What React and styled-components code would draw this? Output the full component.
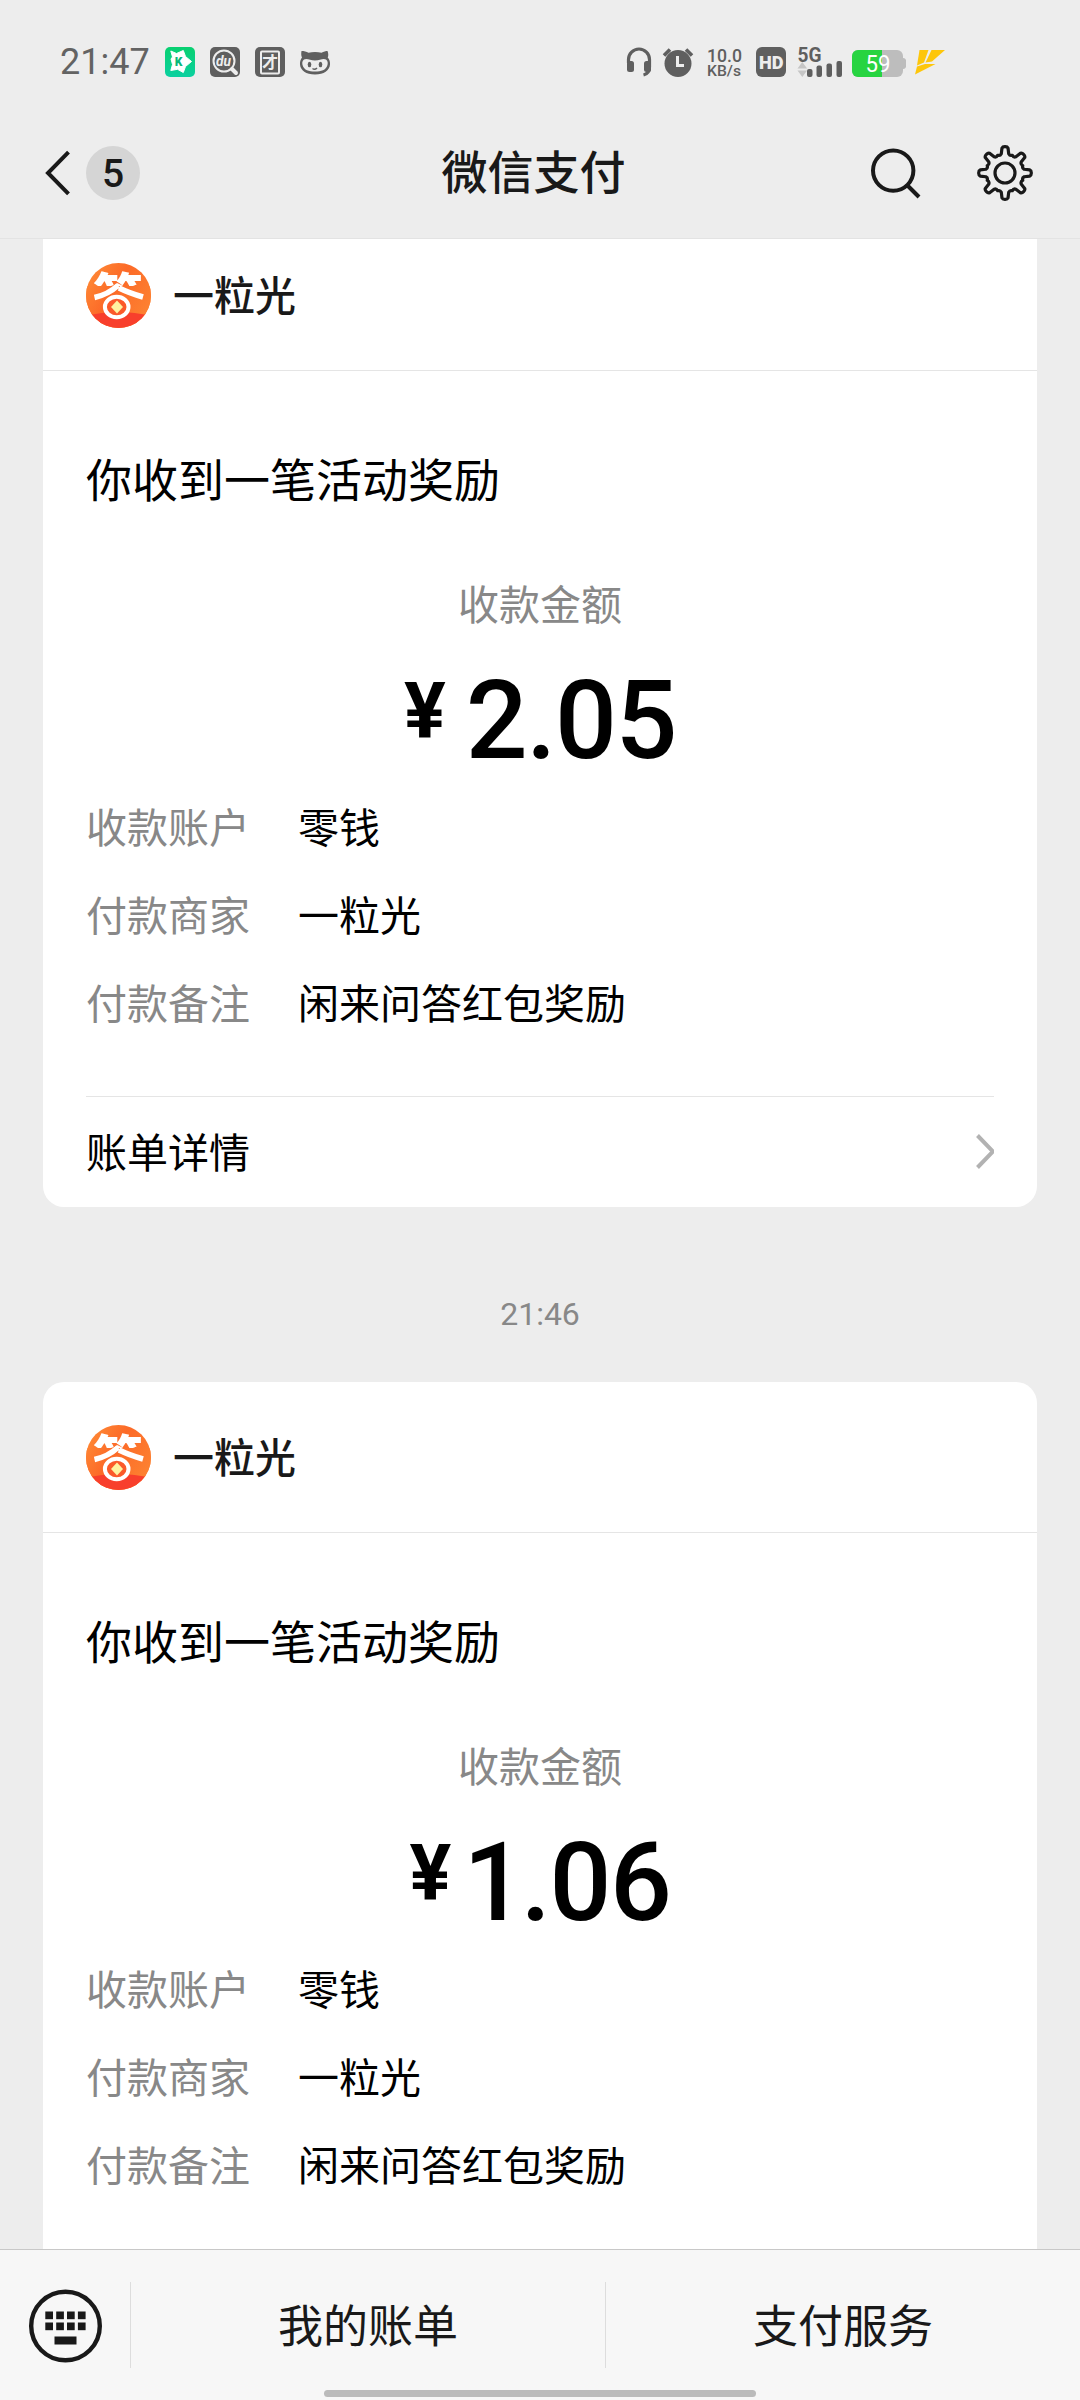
import React from "react";
import styled, { createGlobalStyle } from "styled-components";

const GlobalStyle = createGlobalStyle`
  * {
    box-sizing: border-box;
  }

  body {
    margin: 0;
    background: #ededed;
  }
`;

const cjk = `"Noto Sans CJK SC", sans-serif`;
const latin = `Roboto, "Noto Sans CJK SC", sans-serif`;

const Screen = styled.div`
  display: flex;
  flex-direction: column;
  width: 1080px;
  height: 2400px;
  overflow: hidden;
  background: #ededed;
  color: #000;
  font-family: ${cjk};
`;

const StatusBar = styled.header`
  display: flex;
  align-items: center;
  justify-content: space-between;
  height: 124px;
  padding: 0 134px 0 60px;
  flex-shrink: 0;
`;

const StatusGroup = styled.div`
  display: flex;
  align-items: center;
  gap: ${({ $gap }) => $gap}px;

  svg {
    display: block;
    overflow: visible;
  }
`;

const Clock = styled.span`
  width: 90px;
  font-family: ${latin};
  font-size: 36px;
  line-height: 44px;
  color: #636363;
`;

const NavBar = styled.nav`
  display: grid;
  grid-template-columns: 1fr auto 1fr;
  align-items: center;
  height: 115px;
  padding: 0 47px 16px 44px;
  border-bottom: 1px solid #e3e3e3;
  flex-shrink: 0;
`;

const NavLeft = styled.div`
  display: flex;
  align-items: center;
  gap: 16px;
`;

const Unread = styled.span`
  width: 54px;
  height: 54px;
  border-radius: 50%;
  background: #d5d5d5;
  font-family: ${latin};
  font-size: 39px;
  font-weight: 500;
  line-height: 56px;
  text-align: center;
  color: #191919;
`;

const Title = styled.h1`
  margin: 0 10px 0 0;
  padding-bottom: 8px;
  font-size: 46px;
  font-weight: 500;
  line-height: 70px;
  color: #191919;
`;

const NavRight = styled.div`
  display: flex;
  align-items: center;
  justify-content: flex-end;
  gap: 54px;
`;

const Feed = styled.main`
  flex: 1;
  min-height: 0;
  overflow: hidden;
  padding: 0 43px;
`;

const Card = styled.article`
  height: 987px;
  margin-top: ${({ $scrolled }) => ($scrolled ? "-19px" : "0")};
  border-radius: 21px;
  background: #fff;
`;

const CardHeader = styled.div`
  display: flex;
  align-items: center;
  gap: 22px;
  height: 151px;
  padding: 1px 43px 0;
  border-bottom: 1px solid #e5e5e5;
`;

const Merchant = styled.span`
  font-size: 41px;
  font-weight: 500;
  line-height: 62px;
  padding-bottom: 5px;
  color: #191919;
`;

const CardBody = styled.div`
  padding: 72px 43px 0;
`;

const Message = styled.p`
  margin: 0 0 60px;
  font-size: 46px;
  line-height: 68px;
`;

const AmountLabel = styled.p`
  margin: 0 0 42px;
  font-size: 41px;
  line-height: 62px;
  text-align: center;
  color: #888;
`;

const Amount = styled.div`
  display: flex;
  justify-content: center;
  gap: 20px;
  height: 90px;
  font-family: ${latin};
  font-weight: 500;
`;

const Yen = styled.span`
  font-size: 78px;
  font-weight: 700;
  line-height: 73px;
`;

const Digits = styled.span`
  font-size: 109px;
  line-height: 93px;
  letter-spacing: -1.5px;
`;

const Digit = styled.span`
  margin: ${({ $narrow }) => ($narrow ? "0 -3px 0 -8px" : "0")};
`;

const Details = styled.dl`
  margin: 16px 0 51px;
`;

const DetailRow = styled.div`
  display: flex;
  font-size: 41px;
  line-height: 88px;

  dt {
    width: 212px;
    color: #888;
  }

  dd {
    margin: 0;
  }
`;

const CardFooter = styled.div`
  display: flex;
  align-items: center;
  justify-content: space-between;
  height: 111px;
  border-top: 1px solid #e5e5e5;
  font-size: 41px;
  line-height: 62px;

  span {
    padding-bottom: 4px;
  }
`;

const Timestamp = styled.div`
  height: 175px;
  padding-top: 87px;
  font-family: ${latin};
  font-size: 32px;
  line-height: 40px;
  text-align: center;
  color: #888;
`;

const BottomBar = styled.footer`
  position: relative;
  display: flex;
  align-items: center;
  height: 151px;
  border-top: 1px solid #c8c8c8;
  background: #f7f7f7;
  flex-shrink: 0;
`;

const KeyboardButton = styled.div`
  display: flex;
  justify-content: center;
  width: 130px;
  padding-top: 1px;
`;

const MenuItem = styled.div`
  flex: 1;
  height: 86px;
  border-left: 1px solid #ddd;
  font-size: 45px;
  line-height: 84px;
  text-align: center;
  color: #191919;
`;

const HomeIndicator = styled.div`
  position: absolute;
  left: 324px;
  bottom: 3px;
  width: 432px;
  height: 7px;
  border-radius: 4px;
  background: #bbb;
`;

const GREY = "#5f5f5f";

function NotificationIcons() {
  return (
    <svg width="166" height="46" viewBox="0 -8 166 46">
      <defs>
        <linearGradient id="kgreen" x1="0" y1="0" x2="0" y2="1">
          <stop offset="0" stopColor="#08d070" />
          <stop offset="1" stopColor="#0bd0a0" />
        </linearGradient>
      </defs>
      <rect width="30" height="30" rx="5" fill="url(#kgreen)" />
      <path
        d="M5.800 4L11.500 6.500 18.300 3.500 20.500 9.500 26.500 14.500 20.500 19.500 18.300 25.500 12.500 22.300 5.800 23.500 7.500 17.500 6 12 7.500 10z"
        fill="#fff"
        stroke="#fff"
        strokeLinejoin="round"
      />
      <text x="9.800" y="19.200" fontFamily="Roboto" fontSize="12" fontWeight="900" fill="#08b878">
        K
      </text>

      <rect x="45" width="30" height="30" rx="5" fill={GREY} />
      <circle cx="59" cy="14" r="10.500" fill="none" stroke="#ededed" strokeWidth="2" />
      <path d="M67 22l4 4" stroke="#ededed" strokeWidth="4" strokeLinecap="round" />
      <text
        x="51"
        y="19"
        fontFamily="Roboto"
        fontSize="14"
        fontStyle="italic"
        fontWeight="700"
        textLength="15"
        lengthAdjust="spacingAndGlyphs"
        fill="#ededed"
      >
        du
      </text>

      <rect x="90" width="30" height="30" rx="5" fill={GREY} />
      <rect x="96" y="4.500" width="18" height="22" rx="1" fill="none" stroke="#ededed" strokeWidth="2" />
      <text x="97" y="21" fontFamily="Noto Sans CJK SC" fontSize="16" fontWeight="700" fill="#ededed">
        才
      </text>

      <path
        d="M136.500 4c2.500 0 5 .6 7 1.700 4-.9 9-.9 13 0 2-1.100 4.500-1.700 6-1.700 1 2.500 1 5 .2 6.500 1.800 2 2.500 4.500 2.300 7-.5 6-6 10-15 10s-14.500-4-15-10c-.2-2.500.5-5 2-7-.8-1.500-1-4-.5-6.500z"
        fill={GREY}
      />
      <path
        d="M139 12.500c3-1.700 6 1 11 1s8-2.700 11-1c2 1.500 2 4 1.300 6-1.300 4.500-6 6-12.300 6s-11-1.500-12.300-6c-.7-2-.7-4.500 1.300-6z"
        fill="#ededed"
      />
      <ellipse cx="144.500" cy="17.500" rx="1.800" ry="2.700" fill={GREY} />
      <ellipse cx="155.500" cy="17.500" rx="1.800" ry="2.700" fill={GREY} />
      <path d="M147.500 21.500c1.500 1.200 3 1 4.500-.5" fill="none" stroke={GREY} strokeWidth="1.500" />
    </svg>
  );
}

function SystemIcons() {
  return (
    <svg width="320" height="46" viewBox="0 -8 320 46">
      <path
        d="M2.500 16v-3.500a10.500 10.500 0 0 1 21 0V20c0 4.500-2 7-6 8"
        fill="none"
        stroke={GREY}
        strokeWidth="3.200"
      />
      <rect x="1" y="14" width="7" height="11" rx="2.500" fill={GREY} />
      <rect x="18" y="14" width="7" height="11" rx="2.500" fill={GREY} />

      <circle cx="52" cy="16.500" r="13.500" fill={GREY} />
      <path d="M38 8.500l6-6M66 8.500l-6-6" stroke={GREY} strokeWidth="3.600" />
      <path d="M51.500 9v9.500h6.500" fill="none" stroke="#ededed" strokeWidth="3" />

      <g fontFamily="Roboto" fontWeight="500" fill={GREY}>
        <text x="81" y="14.500" fontSize="19" textLength="35" lengthAdjust="spacingAndGlyphs">
          10.0
        </text>
        <text x="81" y="29" fontSize="15.500" textLength="34" lengthAdjust="spacingAndGlyphs">
          KB/s
        </text>
      </g>

      <rect x="130" width="30" height="30" rx="6" fill={GREY} />
      <text
        x="133"
        y="21.800"
        fontFamily="Roboto"
        fontSize="18.500"
        fontWeight="900"
        textLength="24.500"
        lengthAdjust="spacingAndGlyphs"
        fill="#ededed"
      >
        HD
      </text>

      <text
        x="171.500"
        y="14.500"
        fontFamily="Roboto"
        fontSize="19.500"
        fontWeight="700"
        textLength="24"
        lengthAdjust="spacingAndGlyphs"
        fill={GREY}
      >
        5G
      </text>
      <path d="M171.500 21.500l4.800-6.500 4.800 6.500zM171.500 23.500h9.600l-4.800 6.500z" fill="#c6c6c6" />
      <rect x="181" y="22" width="5.500" height="8" rx="2" fill={GREY} />
      <rect x="190.500" y="18.500" width="5.500" height="11.500" rx="2" fill={GREY} />
      <rect x="200.500" y="16.500" width="5.500" height="13.500" rx="2" fill={GREY} />
      <rect x="210.500" y="14" width="5.500" height="16" rx="2" fill={GREY} />

      <clipPath id="charge">
        <rect x="226" y="3" width="30" height="27" />
      </clipPath>
      <rect x="226" y="3" width="51" height="27" rx="6" fill="#bdbdbd" />
      <rect x="226" y="3" width="51" height="27" rx="6" fill="#27d441" clipPath="url(#charge)" />
      <path d="M277 11a3 3 0 0 1 3 2v7a3 3 0 0 1-3 2z" fill="#bdbdbd" />
      <text
        x="239.500"
        y="25"
        fontFamily="Roboto"
        fontSize="23.500"
        textLength="25"
        lengthAdjust="spacingAndGlyphs"
        fill="#fff"
      >
        59
      </text>

      <g fill="#fdc60b">
        <path d="M293.500 3h9l-4.500 12.500-7 3z" />
        <path d="M305.500 3h13.500l-13 11.500-6.500 1z" />
        <path d="M291 19.500l8-2.500h10.500L289 27.500z" />
      </g>
    </svg>
  );
}

function BackIcon() {
  return (
    <svg width="26" height="48" viewBox="0 0 26 48">
      <path d="M24.500 3.200L4 24l20.500 20.800" fill="none" stroke="#191919" strokeWidth="4" />
    </svg>
  );
}

function SearchIcon() {
  return (
    <svg width="54" height="54" viewBox="0 0 54 54">
      <g fill="none" stroke="#191919" strokeWidth="4">
        <circle cx="24.200" cy="24.600" r="20.200" />
        <path d="M38.500 39.500l11.500 11.500" />
      </g>
    </svg>
  );
}

const TEETH = [0, 1, 2, 3, 4, 5, 6, 7];

function point(radius, degrees) {
  const a = ((degrees - 90) * Math.PI) / 180;
  return `${(28 + radius * Math.cos(a)).toFixed(2)} ${(28 + radius * Math.sin(a)).toFixed(2)}`;
}

function gearPath() {
  const parts = TEETH.map((tooth) => {
    const c = tooth * 45;
    return [
      `${tooth ? "L" : "M"}${point(19.5, c - 11)}`,
      `L${point(25, c - 7)}`,
      `Q${point(26.5, c - 5)} ${point(26.3, c)}`,
      `Q${point(26.5, c + 5)} ${point(25, c + 7)}`,
      `L${point(19.5, c + 11)}`,
      `Q${point(17.6, c + 16)} ${point(19.2, c + 22.5)}`,
      `Q${point(17.6, c + 29)} ${point(19.5, c + 34)}`,
    ].join("");
  });
  return `${parts.join("")}Z`;
}

function GearIcon() {
  return (
    <svg width="56" height="56" viewBox="0 0 56 56">
      <g fill="none" stroke="#191919" strokeWidth="3.200" strokeLinejoin="round">
        <path d={gearPath()} />
        <circle cx="28" cy="28" r="10" />
      </g>
    </svg>
  );
}

function MerchantLogo() {
  return (
    <svg width="65" height="65" viewBox="0 0 65 65">
      <defs>
        <linearGradient id="logoBg" gradientUnits="userSpaceOnUse" x1="0" y1="0" x2="65" y2="39">
          <stop offset="0" stopColor="#ff9038" />
          <stop offset="0.5" stopColor="#fc6a28" />
          <stop offset="1" stopColor="#fd8030" />
        </linearGradient>
        <clipPath id="logoClip">
          <circle cx="32.500" cy="32.500" r="32.500" />
        </clipPath>
      </defs>
      <circle cx="32.500" cy="32.500" r="32.500" fill="url(#logoBg)" />
      <text x="7" y="52" fontFamily="Noto Sans CJK SC" fontSize="50" fontWeight="900" fill="#fff">
        答
      </text>
      <g clipPath="url(#logoClip)">
        <rect y="23" width="65" height="42" fill="url(#logoBg)" />
        <path d="M0 53q32-8 65 0v12H0z" fill="#f83f2c" />
      </g>
      <path
        d="M8.500 34.500Q22 31.500 32 22.500M33 25Q43 30 57 34"
        fill="none"
        stroke="#fff"
        strokeWidth="5.500"
      />
      <ellipse cx="30.700" cy="44" rx="11.800" ry="10.200" fill="#fb5a2a" stroke="#fff" strokeWidth="4" />
      <path d="M31 37.500l6 6.500-6 6.500-6-6.500z" fill="#fff3a0" />
    </svg>
  );
}

function ChevronIcon() {
  return (
    <svg width="19" height="38" viewBox="0 0 19 38">
      <path d="M2.500 2.500L18 18.500 2.500 34.500" fill="none" stroke="#b2b2b2" strokeWidth="4" />
    </svg>
  );
}

function KeyboardIcon() {
  return (
    <svg width="74" height="74" viewBox="0 0 74 74">
      <circle cx="37.500" cy="37" r="34.300" fill="none" stroke="#191919" strokeWidth="4.400" />
      <g fill="#191919">
        {[17.3, 28.2, 39, 49.9].map((x) => (
          <React.Fragment key={x}>
            <rect x={x} y="22.500" width="7.700" height="7.700" />
            <rect x={x} y="33.500" width="7.700" height="7.700" />
          </React.Fragment>
        ))}
        <rect x="26.500" y="47.500" width="22" height="8" />
      </g>
    </svg>
  );
}

function PaymentCard({ amount, scrolled }) {
  const rows = [
    ["收款账户", "零钱"],
    ["付款商家", "一粒光"],
    ["付款备注", "闲来问答红包奖励"],
  ];

  return (
    <Card $scrolled={scrolled}>
      <CardHeader>
        <MerchantLogo />
        <Merchant>一粒光</Merchant>
      </CardHeader>
      <CardBody>
        <Message>你收到一笔活动奖励</Message>
        <AmountLabel>收款金额</AmountLabel>
        <Amount>
          <Yen>¥</Yen>
          <Digits>
            {amount.split("").map((char, i) => (
              <Digit key={i} $narrow={char === "1"}>
                {char}
              </Digit>
            ))}
          </Digits>
        </Amount>
        <Details>
          {rows.map(([label, value]) => (
            <DetailRow key={label}>
              <dt>{label}</dt>
              <dd>{value}</dd>
            </DetailRow>
          ))}
        </Details>
        <CardFooter>
          <span>账单详情</span>
          <ChevronIcon />
        </CardFooter>
      </CardBody>
    </Card>
  );
}

export default function App() {
  return (
    <>
      <GlobalStyle />
      <Screen>
        <StatusBar>
          <StatusGroup $gap={15}>
            <Clock>21:47</Clock>
            <NotificationIcons />
          </StatusGroup>
          <StatusGroup $gap={0}>
            <SystemIcons />
          </StatusGroup>
        </StatusBar>
        <NavBar>
          <NavLeft>
            <BackIcon />
            <Unread>5</Unread>
          </NavLeft>
          <Title>微信支付</Title>
          <NavRight>
            <SearchIcon />
            <GearIcon />
          </NavRight>
        </NavBar>
        <Feed>
          <PaymentCard amount="2.05" scrolled />
          <Timestamp>21:46</Timestamp>
          <PaymentCard amount="1.06" />
        </Feed>
        <BottomBar>
          <KeyboardButton>
            <KeyboardIcon />
          </KeyboardButton>
          <MenuItem>我的账单</MenuItem>
          <MenuItem>支付服务</MenuItem>
          <HomeIndicator />
        </BottomBar>
      </Screen>
    </>
  );
}
